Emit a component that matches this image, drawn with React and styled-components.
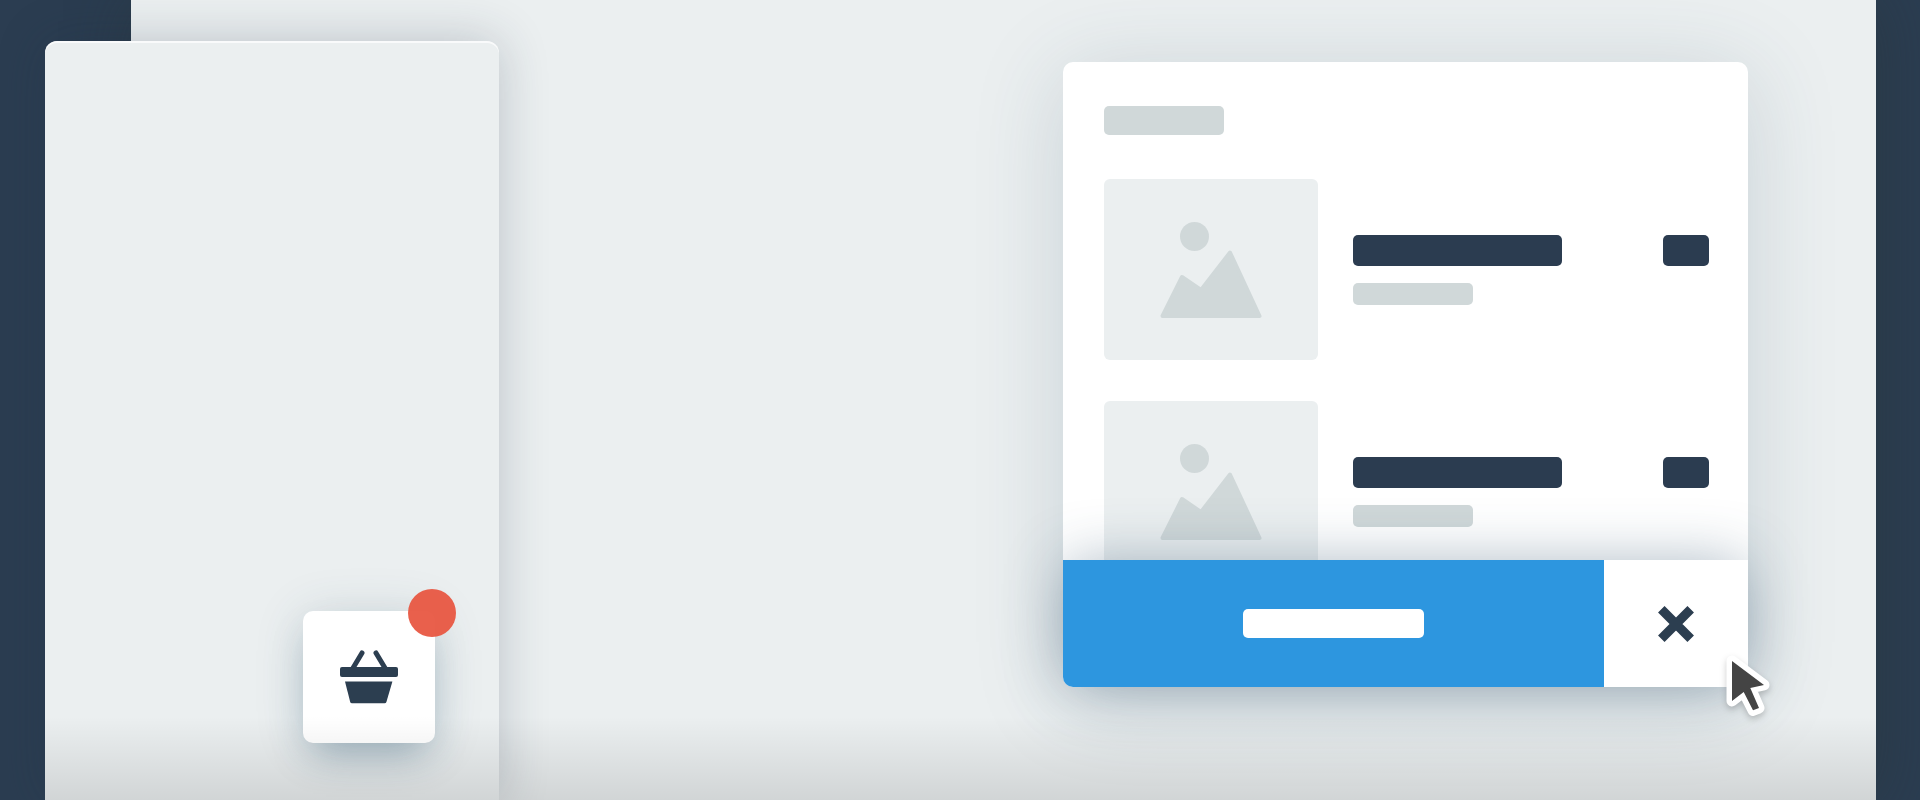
import React from "react";
import styled, { createGlobalStyle } from "styled-components";

const items = [1, 2];

function BasketIcon() {
  return (
    <svg width="58" height="54" viewBox="0 0 58 54" aria-hidden="true">
      <path
        d="M22 3 L13 18 M36 3 L45 18"
        stroke="#2c3e50"
        strokeWidth="5"
        strokeLinecap="round"
      />
      <rect x="0" y="17" width="58" height="10" rx="2" fill="#2c3e50" />
      <path
        d="M5 31.5 H52.4 L46.4 52 Q46 53.3 44.6 53.3 H12 Q10.6 53.3 10.2 52 Z"
        fill="#2c3e50"
      />
    </svg>
  );
}

function PictureIcon() {
  return (
    <svg width="102" height="98" viewBox="0 0 102 98" aria-hidden="true">
      <circle cx="34.5" cy="15.5" r="14.5" fill="#d0d8d9" />
      <path
        d="M2.5 95 L22 56 L41 69 L70 31.5 L99.5 95 Z"
        fill="#d0d8d9"
        stroke="#d0d8d9"
        strokeWidth="4"
        strokeLinejoin="round"
      />
    </svg>
  );
}

function CloseIcon() {
  return (
    <svg width="36" height="36" viewBox="0 0 36 36" aria-hidden="true">
      <path
        d="M3.3 3.3 L32.7 32.7 M32.7 3.3 L3.3 32.7"
        stroke="#2c3e50"
        strokeWidth="9.2"
      />
    </svg>
  );
}

function App() {
  return (
    <>
      <GlobalStyle />
      <Page>
        <Desktop>
          <Modal aria-label="Basket">
            <List>
              <Bar as="h2" $width={120} $height={29} />
              {items.map(id => (
                <Item key={id}>
                  <Thumb>
                    <PictureIcon />
                  </Thumb>
                  <Details>
                    <Bar $width={209} $height={31} $dark />
                    <Bar $width={46} $height={31} $dark />
                    <Bar $width={120} $height={22} />
                  </Details>
                </Item>
              ))}
            </List>
            <Footer>
              <Checkout type="button" aria-label="Checkout">
                <CheckoutLabel />
              </Checkout>
              <Close type="button" aria-label="Close">
                <CloseIcon />
              </Close>
            </Footer>
            <Cursor width="56" height="72" viewBox="0 0 56 72" aria-hidden="true">
              <path
                d="M12 12 L44 36 L30.3 39 L39 59 L33 61.3 L23.7 43 L12 52 Z"
                fill="#fff"
                stroke="#fff"
                strokeWidth="11"
                strokeLinejoin="round"
              />
              <path
                d="M12 12 L44 36 L30.3 39 L39 59 L33 61.3 L23.7 43 L12 52 Z"
                fill="#444"
              />
            </Cursor>
          </Modal>
        </Desktop>
        <Phone>
          <BasketButton type="button" aria-label="Open basket">
            <BasketIcon />
            <Badge />
          </BasketButton>
        </Phone>
        <Shade />
      </Page>
    </>
  );
}

const GlobalStyle = createGlobalStyle`
  * {
    box-sizing: border-box;
  }
  body {
    margin: 0;
    background: #2b3d51;
    font-family: "Open Sans", sans-serif;
  }
`;

const Page = styled.div`
  display: grid;
  grid-template-columns: 45px 86px 368px minmax(0, 1fr) 44px;
  grid-template-rows: 100vh;
  background: #2b3d51;
  overflow: hidden;
`;

const Desktop = styled.main`
  grid-column: 3 / 5;
  grid-row: 1;
  display: flex;
  justify-content: flex-end;
  align-items: flex-start;
  padding: 62px 128px 0 0;
  background: #ebeff0;
  box-shadow: 0 0 60px rgba(40, 50, 50, 0.45);
`;

const Phone = styled.section`
  grid-column: 2 / 4;
  grid-row: 1;
  display: flex;
  justify-content: flex-end;
  align-items: flex-end;
  margin-top: 41px;
  padding: 0 64px 57px 0;
  border-radius: 12px 12px 0 0;
  background: #ebeff0;
  box-shadow: inset 0 2px 0 rgba(255, 255, 255, 0.7),
    0 0 50px rgba(35, 50, 70, 0.24);
`;

const Shade = styled.div`
  grid-column: 2 / 5;
  grid-row: 1;
  align-self: end;
  height: 84px;
  background: linear-gradient(rgba(0, 0, 0, 0), rgba(0, 0, 0, 0.11));
  pointer-events: none;
  z-index: 1;
`;

const BasketButton = styled.button`
  position: relative;
  display: flex;
  align-items: center;
  justify-content: center;
  width: 132px;
  height: 132px;
  padding: 0;
  border: none;
  border-radius: 10px;
  background: #fff;
  box-shadow: 0 4px 50px rgba(44, 82, 100, 0.16),
    0 20px 36px -10px rgba(44, 92, 120, 0.34);
`;

const Badge = styled.span`
  position: absolute;
  top: -22px;
  right: -21px;
  width: 48px;
  height: 48px;
  border-radius: 50%;
  background: rgba(232, 87, 66, 0.95);
`;

const Modal = styled.section`
  position: relative;
  width: 685px;
  max-width: 100%;
  border-radius: 10px;
  background: #fff;
  box-shadow: 0 12px 90px rgba(44, 76, 100, 0.18);
`;

const List = styled.div`
  display: flex;
  flex-direction: column;
  max-height: 498px;
  padding: 44px 39px 0 41px;
  overflow: hidden;
`;

const Bar = styled.div`
  flex: none;
  width: ${props => props.$width}px;
  height: ${props => props.$height}px;
  margin: 0;
  border-radius: 5px;
  background: ${props => (props.$dark ? "#2b3c50" : "#d0d8d9")};
`;

const Item = styled.article`
  display: flex;
  flex: none;
  align-items: center;
  gap: 35px;
  margin-top: 41px;

  h2 + & {
    margin-top: 44px;
  }
`;

const Thumb = styled.div`
  display: flex;
  flex: none;
  align-items: center;
  justify-content: center;
  width: 214px;
  height: 181px;
  border-radius: 6px;
  background: #ebeff0;
`;

const Details = styled.div`
  display: grid;
  flex: 1;
  grid-template-columns: 1fr auto;
  row-gap: 17px;
`;

const Footer = styled.footer`
  position: relative;
  display: flex;
  height: 127px;
  border-radius: 0 0 10px 10px;
  box-shadow: 0 0 60px -4px rgba(44, 76, 105, 0.42);
`;

const Checkout = styled.button`
  display: flex;
  flex: 1;
  align-items: center;
  justify-content: center;
  padding: 0;
  border: none;
  border-radius: 0 0 0 10px;
  background: #2d96df;
`;

const CheckoutLabel = styled.span`
  width: 181px;
  height: 29px;
  border-radius: 5px;
  background: #fff;
`;

const Close = styled.button`
  display: flex;
  align-items: center;
  justify-content: center;
  width: 144px;
  padding: 0;
  border: none;
  border-radius: 0 0 10px 0;
  background: #fff;
`;

const Cursor = styled.svg`
  position: absolute;
  right: -28px;
  bottom: -34px;
  filter: drop-shadow(0 3px 3px rgba(0, 0, 0, 0.2));
`;

export default App;
